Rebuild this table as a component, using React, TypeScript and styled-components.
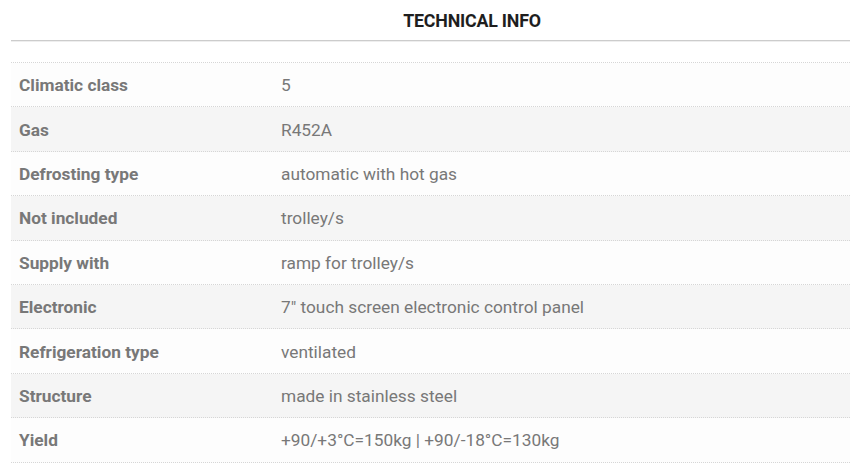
import styled, { createGlobalStyle } from 'styled-components'

const GlobalStyle = createGlobalStyle`
	html, body {
		margin: 0;
		padding: 0;
		background: #fff;
		overflow: hidden;
	}
	body {
		font-family: Roboto, "Liberation Sans", sans-serif;
	}
`

const Page = styled.div`
	width: 850px;
	height: 469px;
	padding-left: 11px;
	box-sizing: border-box;
`

const Title = styled.h2`
	margin: 0;
	height: 40px;
	display: flex;
	align-items: center;
	justify-content: center;
	padding-left: 83px;
	font-size: 17.8px;
	font-weight: 700;
	color: #1e1e1e;
	letter-spacing: -0.2px;
	border-bottom: 1px solid #cccccc;
	box-shadow: 0 1px 0 #eeeeee;
`

const Table = styled.div`
	margin-top: 21px;
	border-top: 1px dotted #d6d6d6;
`

const Row = styled.div<{ shaded?: boolean }>`
	display: grid;
	grid-template-columns: 270px 1fr;
	align-items: center;
	height: 44.4px;
	padding-top: 1px;
	box-sizing: border-box;
	border-bottom: 1px dotted #d6d6d6;
	background: ${props => props.shaded ? '#f5f5f5' : '#fdfdfd'};
	font-size: 17.3px;
	color: #787878;
`

const Label = styled.div`
	padding-left: 8px;
	font-weight: 700;
`

const Value = styled.div`
	font-weight: 400;
`

const specs: [string, string][] = [
	['Climatic class', '5'],
	['Gas', 'R452A'],
	['Defrosting type', 'automatic with hot gas'],
	['Not included', 'trolley/s'],
	['Supply with', 'ramp for trolley/s'],
	['Electronic', '7" touch screen electronic control panel'],
	['Refrigeration type', 'ventilated'],
	['Structure', 'made in stainless steel'],
	['Yield', '+90/+3°C=150kg | +90/-18°C=130kg'],
]

const App = () => {
	return (
		<Page>
			<GlobalStyle />
			<Title>TECHNICAL INFO</Title>
			<Table>
				{specs.map(([label, value], i) => (
					<Row key={label} shaded={i % 2 === 1}>
						<Label>{label}</Label>
						<Value>{value}</Value>
					</Row>
				))}
			</Table>
		</Page>
	)
}

export default App
